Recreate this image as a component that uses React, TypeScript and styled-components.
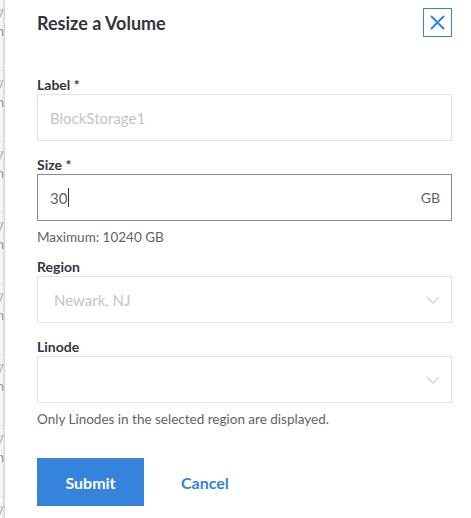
import React from 'react';
import styled, { createGlobalStyle } from 'styled-components';

const GlobalStyle = createGlobalStyle`
  html, body {
    margin: 0;
    padding: 0;
    background: #fff;
    font-family: Lato, "Open Sans", sans-serif;
  }
`;

const Page = styled.div`
  display: flex;
  height: 518px;
  overflow: hidden;
`;

const Backdrop = styled.div`
  width: 4px;
  flex: none;
  overflow: hidden;
  background: #fafafa;
`;

const BackdropRow = styled.div`
  height: 71px;
  border-bottom: 1px solid #ececec;
  padding-top: 6px;
  box-sizing: border-box;
`;

const BackdropLine = styled.div`
  display: flex;
  justify-content: flex-end;
  width: 4px;
  font-size: 13px;
  line-height: 17px;
  color: #9a9a9a;
  white-space: nowrap;
`;

const Panel = styled.div`
  flex: 1;
  background: #fff;
  border-left: 1px solid #d6d6d6;
  box-shadow: -1px 0 3px rgba(0, 0, 0, 0.12);
  padding: 8px 19px 0 32px;
`;

const Header = styled.div`
  display: flex;
  align-items: center;
  justify-content: space-between;
  height: 29px;
`;

const Title = styled.h2`
  margin: 0;
  font-size: 18px;
  font-weight: 700;
  color: #32363c;
`;

const CloseButton = styled.button`
  width: 29px;
  height: 29px;
  padding: 0;
  border: 1px solid #3683dc;
  background: #fff;
  display: flex;
  align-items: center;
  justify-content: center;
  cursor: pointer;
`;

const Form = styled.div`
  display: flex;
  flex-direction: column;
  margin-top: 24px;
`;

const Field = styled.div<{ $gap?: number }>`
  margin-top: ${(p) => p.$gap ?? 15}px;
`;

const Label = styled.label`
  display: block;
  font-size: 14px;
  line-height: 18px;
  font-weight: 700;
  color: #32363c;
`;

const Box = styled.div<{ $focused?: boolean; $padLeft?: number }>`
  height: 47px;
  box-sizing: border-box;
  border: 1px solid ${(p) => (p.$focused ? '#8c8c8c' : '#e3e3e3')};
  display: flex;
  align-items: center;
  padding: 0 11px 0 ${(p) => p.$padLeft ?? 12}px;
  font-size: 15px;
  color: #606469;
`;

const Placeholder = styled.span`
  flex: 1;
  color: #c4c4c4;
`;

const Value = styled.span`
  flex: 1;
  display: flex;
  align-items: center;
`;

const Caret = styled.span`
  display: inline-block;
  width: 1px;
  height: 19px;
  background: #32363c;
  margin-left: 1px;
`;

const Adornment = styled.span`
  font-size: 14px;
  color: #606469;
`;

const Helper = styled.div`
  margin-top: 9px;
  font-size: 13.5px;
  line-height: 14px;
  color: #606469;
`;

const Actions = styled.div`
  display: flex;
  align-items: center;
  margin-top: 32px;
  gap: 37px;
`;

const PrimaryButton = styled.button`
  width: 107px;
  height: 48px;
  border: none;
  background: #3683dc;
  color: #fff;
  font-family: inherit;
  font-size: 16px;
  font-weight: 700;
  cursor: pointer;
`;

const LinkButton = styled.button`
  border: none;
  background: none;
  padding: 0;
  color: #3683dc;
  font-family: inherit;
  font-size: 16px;
  font-weight: 700;
  cursor: pointer;
`;

const Chevron = () => (
  <svg width="14" height="8" viewBox="0 0 14 8">
    <path d="M1 1 L7 7 L13 1" fill="none" stroke="#d9d9d9" strokeWidth="1.5" />
  </svg>
);

function App() {
  const rows = Array.from({ length: 8 });
  return (
    <>
      <GlobalStyle />
      <Page>
        <Backdrop>
          {rows.map((_, i) => (
            <BackdropRow key={i}>
              <BackdropLine>https://</BackdropLine>
              <BackdropLine>linode.com/nn</BackdropLine>
            </BackdropRow>
          ))}
        </Backdrop>
        <Panel>
          <Header>
            <Title>Resize a Volume</Title>
            <CloseButton aria-label="Close">
              <svg width="15" height="15" viewBox="0 0 15 15">
                <path d="M1 1 L14 14 M14 1 L1 14" stroke="#3683dc" strokeWidth="2" />
              </svg>
            </CloseButton>
          </Header>
          <Form>
            <Field>
              <Label>Label *</Label>
              <Box>
                <Placeholder>BlockStorage1</Placeholder>
              </Box>
            </Field>
            <Field>
              <Label>Size *</Label>
              <Box $focused>
                <Value>
                  30
                  <Caret />
                </Value>
                <Adornment>GB</Adornment>
              </Box>
              <Helper>Maximum: 10240 GB</Helper>
            </Field>
            <Field $gap={14}>
              <Label>Region</Label>
              <Box $padLeft={16}>
                <Placeholder>Newark, NJ</Placeholder>
                <Chevron />
              </Box>
            </Field>
            <Field>
              <Label>Linode</Label>
              <Box $padLeft={16}>
                <Placeholder />
                <Chevron />
              </Box>
              <Helper>Only Linodes in the selected region are displayed.</Helper>
            </Field>
            <Actions>
              <PrimaryButton>Submit</PrimaryButton>
              <LinkButton>Cancel</LinkButton>
            </Actions>
          </Form>
        </Panel>
      </Page>
    </>
  );
}

export default App;
